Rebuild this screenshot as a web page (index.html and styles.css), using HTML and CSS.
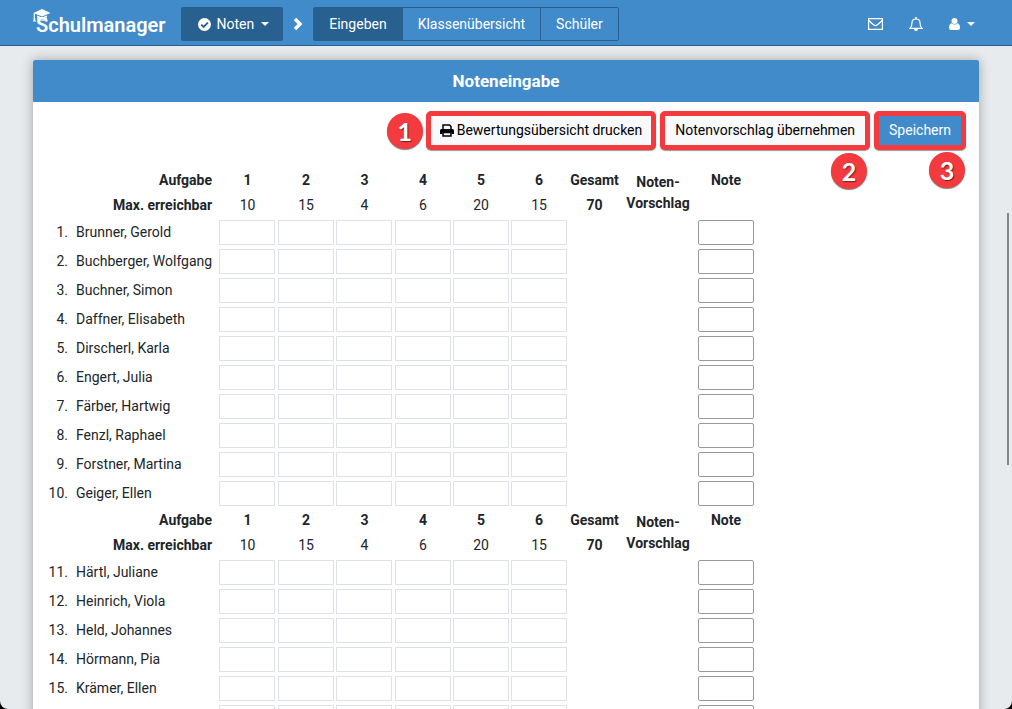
FILE: index.html
```html
<!DOCTYPE html>
<html lang="de">
<head>
<meta charset="utf-8">
<title>Schulmanager</title>
<link rel="stylesheet" href="styles.css">
</head>
<body>
<div class="app">
  <header class="topbar">
    <a class="brand" href="#">
      <svg class="brand-cap" viewBox="0 0 18 15" aria-hidden="true">
        <path fill="#fff" d="M0.500 4 9 0 17.500 4 9 7.500z"/>
        <path fill="#fff" d="M4 6.500 9 8.600 14 6.500V8.600Q9 10.500 4 8.600z"/>
        <path d="M4 9.500Q9 13 14 9.500" fill="none" stroke="#fff" stroke-width="1.200"/>
        <path d="M1.300 4.300V10" stroke="#fff" stroke-width="1.200"/>
        <path fill="#fff" d="M0.900 9.300h1.200L2.800 13 1.500 12.200 0 13z"/>
      </svg>
      <span>Schulmanager</span>
    </a>
    <button class="module" type="button">
      <svg class="icon-check" viewBox="0 0 12 12" aria-hidden="true"><circle cx="6" cy="6" r="6" fill="#fff"/><path d="M3 6.1 5.2 8.2 9.1 4.3" fill="none" stroke="#286090" stroke-width="1.8"/></svg>
      Noten
      <span class="caret"></span>
    </button>
    <svg class="icon-chevron" viewBox="0 0 10 14" aria-hidden="true"><path d="M2 2 7 7 2 12" fill="none" stroke="#fff" stroke-width="3.400"/></svg>
    <nav class="tabs">
      <a class="tab tab-active" href="#" aria-current="page">Eingeben</a>
      <a class="tab" href="#">Klassenübersicht</a>
      <a class="tab" href="#">Schüler</a>
    </nav>
    <div class="tools">
      <button class="tool" type="button" aria-label="Nachrichten">
        <svg width="15" height="12" viewBox="0 0 15 12"><path d="M.6.6h13.8v10.8H.6zM.8 2.4C3 4.5 5.6 7.6 7.5 7.6S12 4.5 14.2 2.4" fill="none" stroke="#fff" stroke-width="1.2"/></svg>
      </button>
      <button class="tool" type="button" aria-label="Benachrichtigungen">
        <svg width="14" height="14" viewBox="0 0 14 14"><path d="M1 11.4C2.6 10 3 8 3 5.7 3 3.3 4.8 2 7 2s4 1.300 4 3.700C11 8 11.400 10 13 11.400z" fill="none" stroke="#fff" stroke-width="1.200"/><path d="M7 0v2" stroke="#fff" stroke-width="1.400"/><path d="M5 12h4a2 2 0 0 1-4 0z" fill="#fff"/></svg>
      </button>
      <button class="tool" type="button" aria-label="Konto">
        <svg width="11" height="12" viewBox="0 0 11 12"><circle cx="5.500" cy="3" r="3" fill="#fff"/><path d="M2.500 5.200Q5.500 7.800 8.500 5.200 11 6 11 9.800 11 12 9 12H2Q0 12 0 9.800 0 6 2.500 5.200z" fill="#fff"/></svg>
        <span class="caret"></span>
      </button>
    </div>
  </header>
  <main class="content">
    <section class="card">
      <h1 class="card-title">Noteneingabe</h1>
      <div class="card-body">
        <div class="actions">
          <div class="action">
            <button class="btn" type="button">
              <svg class="icon-print" viewBox="0 0 14 13" aria-hidden="true"><path d="M3 5V1h6.500L11 2.500V5M3 8.500h8V12H3z" fill="none" stroke="#000" stroke-width="1.500"/><path d="M1.500 5h11Q14 5 14 6.500V10h-2.500V8h-9v2H0V6.500Q0 5 1.500 5z"/></svg>
              Bewertungsübersicht drucken
            </button>
            <span class="marker marker-left">1</span>
          </div>
          <div class="action">
            <button class="btn btn-wide" type="button">Notenvorschlag übernehmen</button>
            <span class="marker marker-below">2</span>
          </div>
          <div class="action">
            <button class="btn btn-wide btn-save" type="button">Speichern</button>
            <span class="marker marker-corner">3</span>
          </div>
        </div>
        <table class="grades">
          <colgroup>
            <col class="c-number"><col class="c-name">
            <col class="c-wide"><col class="c-task"><col class="c-wide"><col class="c-task"><col class="c-task"><col class="c-task">
            <col class="c-total"><col class="c-proposal"><col class="c-task">
          </colgroup>
          <tbody id="rows"></tbody>
        </table>
      </div>
    </section>
  </main>
  <div class="scroll-thumb"></div>
</div>
<script src="script.js"></script>
</body>
</html>
```

FILE: styles.css
```css
* { box-sizing: border-box; }
html { background: #000; }
body {
  margin: 0;
  font: 14px/21px Roboto, "Liberation Sans", sans-serif;
  color: #212529;
}
button, input { font: inherit; }
a { color: inherit; text-decoration: none; }

.app {
  position: relative;
  height: 100vh;
  overflow: hidden;
  background: #e7ebee;
  border-radius: 0 0 8px 8px;
}

.topbar {
  display: flex;
  align-items: center;
  height: 46px;
  padding: 3px 33px 0;
  background: #428bca;
  border-bottom: 1px solid #286090;
  color: #fff;
}
.brand {
  position: relative;
  padding: 2px 0 0 3px;
  margin-right: 15px;
  font-size: 20px;
  font-weight: 600;
}
.brand-cap {
  position: absolute;
  left: 0;
  top: -4px;
  width: 18px;
  height: 15px;
}
.module {
  display: flex;
  align-items: center;
  gap: 6px;
  height: 34px;
  padding: 0 14px 0 17px;
  border: 0;
  border-radius: 2px;
  background: #286090;
  color: #fff;
}
.module .caret { margin-left: 1px; }
.icon-check { width: 13px; height: 13px; }
.icon-chevron { width: 10px; height: 14px; margin: 0 10px; }
.caret {
  border: 4px solid transparent;
  border-top-color: #fff;
  border-bottom: 0;
}
.tabs {
  display: flex;
  border: 1px solid #286090;
  border-radius: 2px;
}
.tab {
  padding: 0 15px;
  line-height: 32px;
}
.tab + .tab { border-left: 1px solid #286090; }
.tab-active { background: #286090; }
.tools {
  display: flex;
  align-items: center;
  gap: 26px;
  margin-left: auto;
  padding-right: 4px;
}
.tool {
  display: flex;
  align-items: center;
  gap: 7px;
  padding: 0;
  border: 0;
  background: none;
}

.content { padding: 14px 33px; }
.card {
  background: #fff;
  border-radius: 2px;
  box-shadow: 0 0 12px rgba(0, 0, 0, 0.3);
}
.card-title {
  margin: 0;
  border-radius: 2px 2px 0 0;
  background: #428bca;
  color: #fff;
  font-size: 17px;
  font-weight: 700;
  line-height: 42px;
  text-align: center;
}
.card-body { padding: 9px 13px 9px 12px; }

.actions {
  display: flex;
  justify-content: flex-end;
  gap: 4px;
  margin-bottom: 18px;
}
.action { position: relative; }
.btn {
  display: flex;
  align-items: center;
  gap: 3px;
  height: 39px;
  padding: 0 9px;
  border: 5px solid #f33b3f;
  border-radius: 5px;
  background: #f8f9fa;
  color: #000;
  box-shadow: 0 1px 1px rgba(0, 0, 0, 0.4);
}
.btn-wide { padding: 0 10px; }
.btn-save { background: #428bca; color: #fff; }
.icon-print { width: 14px; height: 13px; }
.marker {
  position: absolute;
  width: 36px;
  height: 36px;
  border-radius: 50%;
  background: #f33b3f;
  box-shadow: 0 1px 1px rgba(0, 0, 0, 0.5);
  color: #fff;
  font: 700 25px/36px Lato, sans-serif;
  text-align: center;
  text-shadow: 1px 1px 1px rgba(0, 0, 0, 0.5);
}
.marker-left { right: 100%; top: 2px; margin-right: 3px; }
.marker-below { right: 3px; top: 42px; }
.marker-corner { right: 1px; top: 41px; }

.grades {
  width: 0;
  table-layout: fixed;
  border-collapse: collapse;
}
.c-number { width: 27px; }
.c-name { width: 145px; }
.c-wide { width: 59px; }
.c-task { width: 58px; }
.c-total { width: 53px; }
.c-proposal { width: 76px; }
.grades th, .grades td { padding: 0 0 0 2px; text-align: center; white-space: nowrap; }
.grades tr { height: 29px; }
.grades .head { height: 25px; }
.grades .label { padding-right: 5px; text-align: right; }
.grades .proposal { padding: 0; }
.grades .number { padding-right: 4px; text-align: right; }
.grades .name { padding-left: 4px; text-align: left; font-weight: 400; }
.field {
  display: block;
  width: 56px;
  height: 25px;
  padding: 0 4px;
  border: 1px solid #dee2e6;
  border-radius: 0;
  background: #fff;
}
.field-grade { border-color: #999; border-radius: 2px; }

.scroll-thumb {
  position: absolute;
  right: 3px;
  top: 213px;
  width: 2px;
  height: 252px;
  background: #868686;
}
```

FILE: script.js
```js
const maxPoints = [10, 15, 4, 6, 20, 15];
const students = [
  "Brunner, Gerold", "Buchberger, Wolfgang", "Buchner, Simon", "Daffner, Elisabeth",
  "Dirscherl, Karla", "Engert, Julia", "Färber, Hartwig", "Fenzl, Raphael",
  "Forstner, Martina", "Geiger, Ellen", "Härtl, Juliane", "Heinrich, Viola",
  "Held, Johannes", "Hörmann, Pia", "Krämer, Ellen", ""
];
const total = maxPoints.reduce((sum, points) => sum + points, 0);

const headRows = () => `
  <tr class="head">
    <th class="label" colspan="2">Aufgabe</th>
    ${maxPoints.map((_, i) => `<th>${i + 1}</th>`).join("")}
    <th>Gesamt</th>
    <th class="proposal" rowspan="2">Noten-<br>Vorschlag</th>
    <th>Note</th>
  </tr>
  <tr class="head">
    <th class="label" colspan="2">Max. erreichbar</th>
    ${maxPoints.map((points) => `<td>${points}</td>`).join("")}
    <th>${total}</th>
    <td></td>
  </tr>`;

const studentRow = (name, index) => `
  <tr>
    <td class="number">${name ? `${index + 1}.` : ""}</td>
    <th class="name" scope="row">${name}</th>
    ${maxPoints.map((_, i) => `<td><input class="field" type="text" aria-label="${name} Aufgabe ${i + 1}"></td>`).join("")}
    <td></td>
    <td></td>
    <td><input class="field field-grade" type="text" aria-label="${name} Note"></td>
  </tr>`;

document.getElementById("rows").innerHTML = students
  .map((name, index) => (index % 10 === 0 ? headRows() : "") + studentRow(name, index))
  .join("");
```
